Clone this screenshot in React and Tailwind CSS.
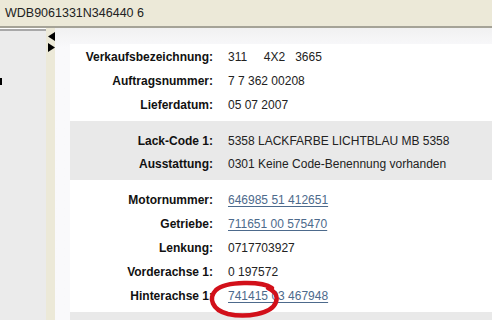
import React from "react";

const Row = ({ label, value, link, h = "h-[24px]" }) => (
  <div className={`grid grid-cols-[143px_1fr] gap-x-[15px] ${h} items-center`}>
    <div className="text-right font-bold text-[#111]">{label}</div>
    <div className="whitespace-pre">
      {link ? (
        <span className="text-[#4d6a8c] underline underline-offset-2">{value}</span>
      ) : (
        <span className="text-[#222]">{value}</span>
      )}
    </div>
  </div>
);

export default function App() {
  return (
    <div className="w-[492px] h-[320px] overflow-hidden relative bg-white font-['Liberation_Sans',Arial,sans-serif] text-[12px] text-[#111]">
      <div className="h-[28px] bg-[#ece9d8] border-b-[2px] border-[#a5a397] flex items-center pl-[5px] text-[12.5px] text-[#222]">
        WDB9061331N346440 6
      </div>
      <div className="flex h-[292px]">
        <div className="w-[46px] bg-[#ebebeb] border-t-[2px] border-[#a8a8a8] mt-[1px]">
          <div className="w-[2px] h-[7px] bg-black mt-[47px]"></div>
        </div>
        <div className="w-[9px] bg-[#ece9d8] flex flex-col items-end pt-[4px] gap-[2px]">
          <svg width="7" height="9" viewBox="0 0 7 9"><path d="M7 0 L0 4.5 L7 9 Z" fill="#000" /></svg>
          <svg width="7" height="9" viewBox="0 0 7 9"><path d="M0 0 L7 4.5 L0 9 Z" fill="#000" /></svg>
        </div>
        <div className="flex-1 bg-gradient-to-b from-[#f1f1f1] to-[#f9f9fb] to-[20px] pl-[15px] pt-[16px]">
          <div className="bg-white pt-[1px] pb-[4px]">
            <Row label="Verkaufsbezeichnung:" value="311     4X2   3665" />
            <Row label="Auftragsnummer:" value="7 7 362 00208" />
            <Row label="Lieferdatum:" value="05 07 2007" />
          </div>
          <div className="bg-[#e9e9e9] pt-[8px] pb-[5px]">
            <Row label="Lack-Code 1:" value="5358 LACKFARBE LICHTBLAU MB 5358" h="h-[23px]" />
            <Row label="Ausstattung:" value="0301 Keine Code-Benennung vorhanden" h="h-[23px]" />
          </div>
          <div className="bg-white pt-[8px] pb-[4px]">
            <Row label="Motornummer:" value="646985 51 412651" link />
            <Row label="Getriebe:" value="711651 00 575470" link />
            <Row label="Lenkung:" value="0717703927" />
            <Row label="Vorderachse 1:" value="0 197572" />
            <Row label="Hinterachse 1:" value="741415 03 467948" link />
          </div>
          <div className="bg-[#e9e9e9] h-[20px]"></div>
        </div>
      </div>
      <svg className="absolute left-[206px] top-[278px]" width="80" height="42" viewBox="0 0 80 42">
        <path
          d="M66 10 C 56 3, 20 3, 10 12 C 2 20, 6 32, 22 36 C 40 40, 66 36, 70 24 C 72 18, 70 14, 62 10"
          fill="none"
          stroke="#d2101a"
          strokeWidth="4.5"
          strokeLinecap="round"
        />
      </svg>
    </div>
  );
}
